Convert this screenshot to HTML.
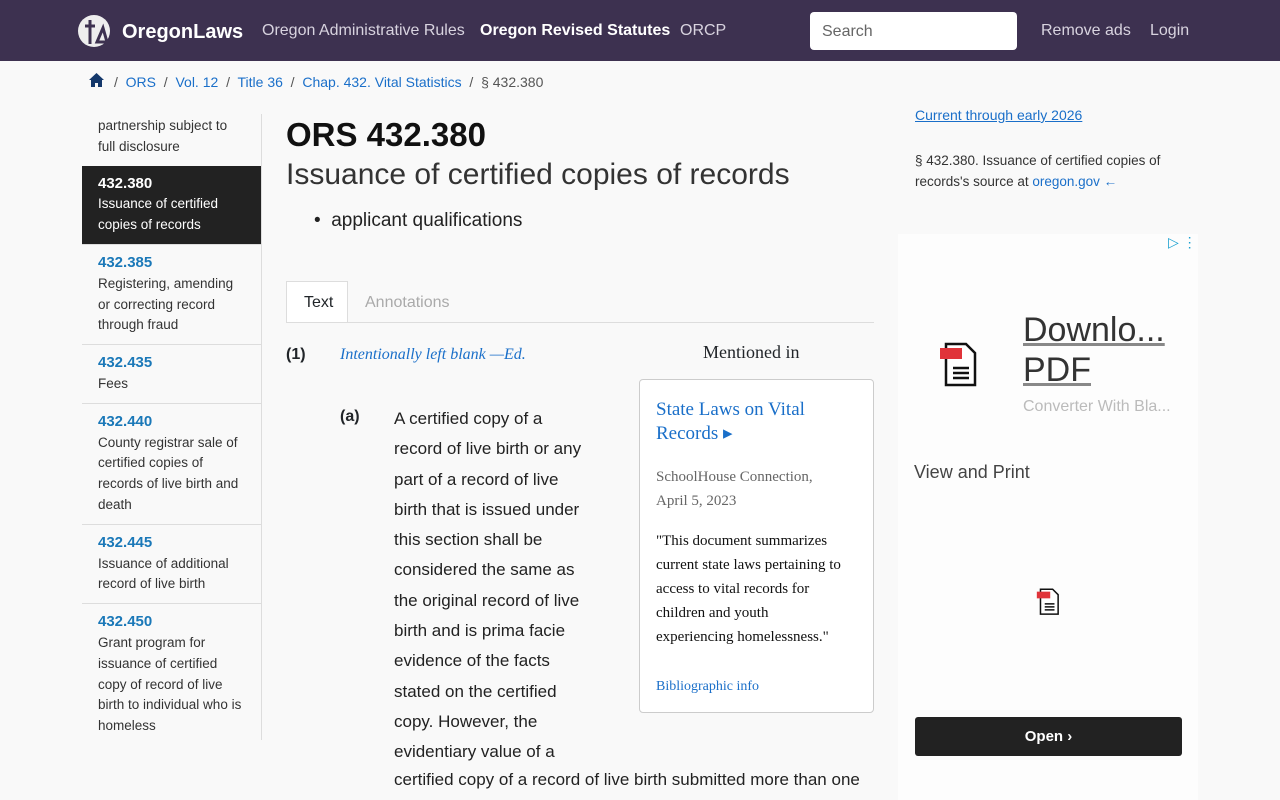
<!DOCTYPE html>
<html><head><meta charset="utf-8"><style>
*{box-sizing:border-box;margin:0;padding:0}
body{width:1280px;height:800px;overflow:hidden;background:#f9f9f9;font-family:"Liberation Sans",sans-serif;color:#212529;position:relative}
.hdr{position:absolute;left:0;top:0;width:1280px;height:61px;background:#3d3150}
.hdr span{position:absolute;top:22px;font-size:16px;color:#d8d3df}
.a{position:absolute;white-space:nowrap}
.lk{color:#1a6fc9}
.side{position:absolute;left:82px;top:114px;width:180px;height:626px;border-right:1px solid #ddd}
.it{padding:0 16px;font-size:13.5px;line-height:20.8px;color:#333;border-bottom:1px solid #ddd}
.it b{color:#1a78b8;font-size:15px;display:block}
</style></head><body>
<div class="hdr">
<svg class="a" style="left:77px;top:14px" width="34" height="34" viewBox="0 0 34 34"><circle cx="17" cy="17" r="16" fill="#eee"/><path d="M13 6v24M8 12h10M20 28l6-14 4 14z" stroke="#3d3150" stroke-width="3" fill="none"/></svg>
<span style="left:122px;top:21px;font-size:20px;font-weight:bold;color:#fff">OregonLaws</span>
<span style="left:262px">Oregon Administrative Rules</span>
<span style="left:480px;font-weight:bold;color:#fff">Oregon Revised Statutes</span>
<span style="left:680px">ORCP</span>
<div class="a" style="left:810px;top:12px;width:207px;height:38px;background:#fff;border-radius:4px;padding:11px 12px;font-size:16px;color:#666">Search</div>
<span style="left:1041px">Remove ads</span>
<span style="left:1150px">Login</span>
</div>
<svg class="a" style="left:88px;top:72px" width="17" height="16" viewBox="0 0 17 16"><path d="M8.5 1L1 8h2v7h4v-4h3v4h4V8h2z" fill="#14386b"/></svg>
<div class="a" style="left:114px;top:74px;font-size:14px;color:#555">/ &nbsp;<span class="lk">ORS</span> &nbsp;/&nbsp; <span class="lk">Vol. 12</span> &nbsp;/&nbsp; <span class="lk">Title 36</span> &nbsp;/&nbsp; <span class="lk">Chap. 432. Vital Statistics</span> &nbsp;/&nbsp; § 432.380</div>
<div class="side">
<div class="it" style="padding-top:2px;padding-bottom:8px;border:none">partnership subject to full disclosure</div>
<div class="it" style="background:#222;color:#fff;padding-top:8px;padding-bottom:8px"><b style="color:#fff">432.380</b>Issuance of certified copies of records</div>
<div class="it" style="padding-top:8px;padding-bottom:8px"><b>432.385</b>Registering, amending or correcting record through fraud</div>
<div class="it" style="padding-top:8px;padding-bottom:8px"><b>432.435</b>Fees</div>
<div class="it" style="padding-top:8px;padding-bottom:8px"><b>432.440</b>County registrar sale of certified copies of records of live birth and death</div>
<div class="it" style="padding-top:8px;padding-bottom:8px"><b>432.445</b>Issuance of additional record of live birth</div>
<div class="it" style="padding-top:8px;padding-bottom:8px;border:none"><b>432.450</b>Grant program for issuance of certified copy of record of live birth to individual who is homeless</div>
</div>
<div class="a" style="left:286px;top:116px;font-size:33px;font-weight:bold;color:#111">ORS 432.380</div>
<div class="a" style="left:286px;top:158px;font-size:30px;color:#333">Issuance of certified copies of records</div>
<div class="a" style="left:314px;top:210px;font-size:19px;color:#222">•&nbsp;&nbsp;applicant qualifications</div>
<div class="a" style="left:286px;top:281px;width:62px;height:42px;border:1px solid #ddd;border-bottom:none;background:#fff;font-size:16px;padding:12px 0 0 17px">Text</div>
<div class="a" style="left:365px;top:294px;font-size:16px;color:#aaa">Annotations</div>
<div class="a" style="left:286px;top:322px;width:588px;border-top:1px solid #ddd"></div>
<div class="a" style="left:286px;top:346px;font-size:16px;font-weight:bold">(1)</div>
<div class="a" style="left:340px;top:346px;font-size:16px;font-style:italic;font-family:'Liberation Serif',serif;color:#1a6fc9">Intentionally left blank —Ed.</div>
<div class="a" style="left:340px;top:408px;font-size:16px;font-weight:bold">(a)</div>
<div class="a" style="left:394px;top:404px;width:200px;font-size:17px;line-height:30.3px;white-space:normal;color:#222">A certified copy of a record of live birth or any part of a record of live birth that is issued under this section shall be considered the same as the original record of live birth and is prima facie evidence of the facts stated on the certified copy. However, the evidentiary value of a</div>
<div class="a" style="left:394px;top:770px;font-size:17px;color:#222">certified copy of a record of live birth submitted more than one</div>
<div class="a" style="left:703px;top:342px;font-family:'Liberation Serif',serif;font-size:18px">Mentioned in</div>
<div class="a" style="left:639px;top:379px;width:235px;height:334px;border:1px solid #ccc;border-radius:4px;background:#fff;font-family:'Liberation Serif',serif;padding:18px 16px;white-space:normal">
<div style="font-size:19px;line-height:24px;color:#1a6fc9">State Laws on Vital Records ▸</div>
<div style="font-size:15px;line-height:24px;color:#666;margin-top:19px;width:180px">SchoolHouse Connection, April 5, 2023</div>
<div style="font-size:15px;line-height:24px;color:#111;margin-top:16px;width:192px">"This document summarizes current state laws pertaining to access to vital records for children and youth experiencing homelessness."</div>
<div style="font-size:14px;color:#1a6fc9;margin-top:30px">Bibliographic info</div>
</div>
<div class="a" style="left:915px;top:107px;font-size:14px;color:#1a6fc9;text-decoration:underline">Current through early 2026</div>
<div class="a" style="left:915px;top:150px;width:270px;font-size:13.5px;line-height:21px;white-space:normal;color:#333">§ 432.380. Issuance of certified copies of records's source at <span class="lk">oregon.gov ←</span></div>
<div class="a" style="left:898px;top:234px;width:300px;height:566px;background:#fdfdfd"></div>
<div class="a" style="left:1168px;top:234px;font-size:14px;color:#1aa0d0">▷ ⋮</div>
<svg class="a" style="left:939px;top:342px" width="42" height="46" viewBox="0 0 42 46"><path d="M7 2h20l9 9v32H7z" fill="#fff" stroke="#111" stroke-width="2.5"/><rect x="1" y="6" width="22" height="11" fill="#e0343a"/><path d="M14 26h16M14 31h16M14 36h16" stroke="#111" stroke-width="2.5"/></svg>
<div class="a" style="left:1023px;top:310px;font-size:34px;line-height:40px;color:#333;text-decoration:underline;text-decoration-color:#888">Downlo...<br>PDF</div>
<div class="a" style="left:1023px;top:398px;font-size:16px;color:#bbb">Converter With Bla...</div>
<div class="a" style="left:914px;top:462px;font-size:18px;color:#444">View and Print</div>
<svg class="a" style="left:1036px;top:588px" width="26" height="28" viewBox="0 0 42 46"><path d="M7 2h20l9 9v32H7z" fill="#fff" stroke="#111" stroke-width="2.5"/><rect x="1" y="6" width="22" height="11" fill="#e0343a"/><path d="M14 26h16M14 31h16M14 36h16" stroke="#111" stroke-width="2.5"/></svg>
<div class="a" style="left:915px;top:717px;width:267px;height:39px;background:#222;border-radius:3px;color:#fff;font-size:15px;font-weight:bold;text-align:center;padding-top:11px">Open ›</div>
</body></html>
